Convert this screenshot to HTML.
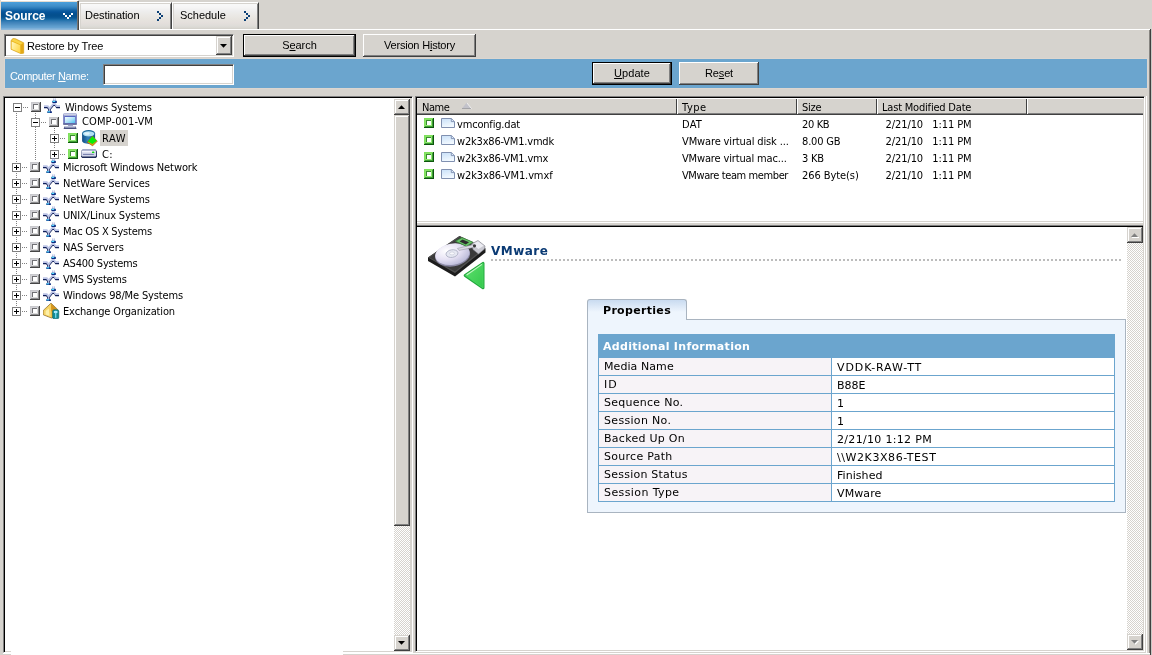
<!DOCTYPE html><html><head><meta charset="utf-8"><title>Restore Manager</title><style>
*{box-sizing:border-box;margin:0;padding:0}
html,body{width:1152px;height:655px;overflow:hidden;background:#d6d3ce}
body{position:relative;color:#000;line-height:13px;font-family:"DejaVu Sans Condensed","DejaVu Sans","Liberation Sans",sans-serif;font-size:11px}
#root{position:absolute;left:0;top:0;width:1152px;height:655px;overflow:hidden;will-change:transform}
.a{position:absolute}
.t{position:absolute;white-space:nowrap;line-height:13px;height:13px}
.tah{font-family:"DejaVu Sans Condensed","DejaVu Sans","Liberation Sans",sans-serif;font-size:11px}
.ms{font-family:"Liberation Sans",sans-serif;font-size:11px}
.msb{font-family:"Liberation Sans",sans-serif;font-size:12px;font-weight:bold}
.ver{font-family:"DejaVu Sans","Liberation Sans",sans-serif;font-size:11px}
.verb{font-family:"DejaVu Sans","Liberation Sans",sans-serif;font-size:11px;font-weight:bold}
.verh{font-family:"DejaVu Sans","Liberation Sans",sans-serif;font-size:12px;font-weight:bold}
u{text-decoration:underline;text-underline-offset:1px;text-decoration-thickness:1px}
.btn{position:absolute;background:#d6d3ce;box-shadow:inset -1px -1px #404040,inset 1px 1px #fff,inset -2px -2px #808080}
.btn.def{border:1px solid #000}
.sunk{position:absolute;background:#fff;border:1px solid;border-color:#808080 #fff #fff #808080;box-shadow:inset 1px 1px #404040,inset -1px -1px #d6d3ce}
.sunk.k{box-shadow:inset 1px 1px #000,inset -1px -1px #d6d3ce}
.sb{position:absolute;width:16px;background-color:#d6d3ce;background-image:conic-gradient(#fff 25%,#d6d3ce 0 50%,#fff 0 75%,#d6d3ce 0);background-size:2px 2px}
.sbb{position:absolute;left:0;width:16px;height:16px;background:#d6d3ce;box-shadow:inset -1px -1px #404040,inset 1px 1px #d6d3ce,inset -2px -2px #808080,inset 2px 2px #fff}
.tab{position:absolute;top:2px;height:27px;border-right:1px solid #404040;border-left:1px solid #fff;border-top:1px solid #fff;box-shadow:inset 1px 1px #d6d3ce,inset -1px 0 #808080;background:linear-gradient(#f8f8f8 0,#f8f8f8 2px,#f5f4f4 5px,#eeeeee 8px,#ebe9e6 12px,#e7e4df 16px,#e4dfdc 20px,#dedcd8 23px,#d8d6d0 25px,#d0cdc8 26px)}
.xb{position:absolute;width:9px;height:9px;border:1px solid #808080;background:#fff}
.xb i{position:absolute;left:1px;top:3px;width:5px;height:1px;background:#000}
.xb b{position:absolute;left:3px;top:1px;width:1px;height:5px;background:#000}
.hd{position:absolute;background-image:linear-gradient(90deg,#808080 50%,transparent 0);background-size:2px 1px;height:1px}
.vd{position:absolute;background-image:linear-gradient(#808080 50%,transparent 0);background-size:1px 2px;width:1px}
.cb{position:absolute;width:10px;height:10px}
</style></head><body>
<div id="root">
<svg width="0" height="0" style="position:absolute">
<defs>
<linearGradient id="gfile" x1="0" y1="0" x2="0.3" y2="1"><stop offset="0" stop-color="#c8e0f8"/><stop offset="1" stop-color="#f2f9ff"/></linearGradient>
<linearGradient id="gfold" x1="0" y1="0" x2="1" y2="0.6"><stop offset="0" stop-color="#fff8c8"/><stop offset="0.5" stop-color="#ffe884"/><stop offset="1" stop-color="#ffd850"/></linearGradient>
<linearGradient id="gscr" x1="0" y1="0" x2="1" y2="1"><stop offset="0" stop-color="#f4fdff"/><stop offset="0.5" stop-color="#b4e4f8"/><stop offset="1" stop-color="#4cc0f0"/></linearGradient>
<linearGradient id="gcyl" x1="0" y1="0" x2="1" y2="0"><stop offset="0" stop-color="#114c84"/><stop offset="0.45" stop-color="#3484bc"/><stop offset="1" stop-color="#185890"/></linearGradient>
<radialGradient id="plat" cx="0.35" cy="0.3" r="0.8"><stop offset="0" stop-color="#ffffff"/><stop offset="0.5" stop-color="#e6e2f4"/><stop offset="1" stop-color="#b4b4d4"/></radialGradient>
<linearGradient id="garr" x1="0" y1="0" x2="1" y2="1"><stop offset="0" stop-color="#5ee06e"/><stop offset="1" stop-color="#34c84c"/></linearGradient>
<symbol id="cbg" viewBox="0 0 10 10">
<g shape-rendering="crispEdges">
<rect width="10" height="10" fill="#c8c8cc"/>
<path d="M9 0h1v10h-10v-1h9z" fill="#464646"/>
<path d="M8 1h1v8h-8v-1h7z" fill="#8e8e90"/>
<rect x="1" y="1" width="7" height="7" fill="#d2d2d6"/>
<rect x="2" y="2" width="6" height="6" fill="#dcdcdc"/>
<path d="M2 2h5v1h-4v4h-1z" fill="#707074"/>
<rect x="3" y="3" width="4" height="4" fill="#fff"/>
</g></symbol>
<symbol id="cbn" viewBox="0 0 10 10">
<g shape-rendering="crispEdges">
<rect width="10" height="10" fill="#7fe05c"/>
<path d="M9 0h1v10h-10v-1h9z" fill="#0c560c"/>
<path d="M8 1h1v8h-8v-1h7z" fill="#3e9e36"/>
<rect x="1" y="1" width="7" height="7" fill="#86e466"/>
<rect x="2" y="2" width="6" height="6" fill="#92ea72"/>
<path d="M2 2h5v1h-4v4h-1z" fill="#3a8a30"/>
<rect x="3" y="3" width="4" height="4" fill="#fff"/>
</g></symbol>
<symbol id="net" viewBox="0 0 16 16">
<g fill="none">
<path d="M0 9.6H3.3L5.5 12.2L10.5 6.2L12.7 9.6H16" stroke="#101f58" stroke-width="1.1"/>
<path d="M0 8.2H3.8L5.6 10.4L10.4 4.8L12.4 8.2H16" stroke="#bcc4e6" stroke-width="1.7"/>
<path d="M9.7 0.4V3M11.3 0.4V3" stroke="#a8b2de" stroke-width="0.9"/>
<path d="M4.7 11.6V13.6M6.3 11.6V13.6" stroke="#16286a" stroke-width="0.9"/>
<path d="M5.5 11V13.4" stroke="#c8d0ec" stroke-width="0.8"/>
</g>
<rect x="3.3" y="13.2" width="4.6" height="1.9" rx="0.4" fill="#0c2c80"/>
<rect x="3.6" y="13.2" width="2.4" height="1.2" fill="#4fd8ff"/>
<rect x="8.3" y="2.8" width="4.6" height="2.1" rx="0.4" fill="#0c2c80"/>
<rect x="8.6" y="2.8" width="2.6" height="1.2" fill="#4fd8ff"/>
</symbol>
<symbol id="file" viewBox="0 0 14 10">
<path d="M0.5 0.5H10.5L13.5 3.5V9.5H0.5Z" fill="url(#gfile)" stroke="#8090b0" stroke-width="1"/>
<path d="M10.3 0.8V3.6H13.3" fill="#dce8fa" stroke="#7c8cae" stroke-width="0.9"/>
</symbol>
<symbol id="folder" viewBox="0 0 15 16">
<path d="M1 2.4L3 0.5L5.4 0.7L13.7 4.8V15.2L11 15.7L1 11.3Z" fill="#ecb41c" stroke="#d49c10" stroke-width="0.6"/>
<path d="M3 1L5.2 1.2L12.8 5L10.6 6.6L2 2.8Z" fill="#f8d448"/>
<path d="M1.6 3.4L10.4 7.2V15L1.6 10.9Z" fill="url(#gfold)"/>
<path d="M10.7 7.2L13.3 5.6V14.7L10.7 15.2Z" fill="#e2a818"/>
</symbol>
<symbol id="comp" viewBox="0 0 16 17">
<rect x="1" y="0.2" width="14" height="11.6" rx="1.5" fill="#8890ca"/>
<rect x="1.6" y="0.4" width="12.8" height="2.2" rx="1" fill="#ccd0e4"/>
<rect x="1.2" y="10.2" width="13.6" height="1.6" rx="0.6" fill="#5c648e"/>
<rect x="2.6" y="3" width="10.8" height="7.4" fill="#5866c2"/>
<rect x="3" y="4" width="10" height="6" fill="url(#gscr)"/>
<path d="M6.3 11.8h4.4l0.8 2h-6z" fill="#9aa0c6"/>
<path d="M2.4 13.4h11.4l0.8 2.6h-13z" fill="#4a5280"/>
<path d="M3 13.3h10.2l0.3 1.1h-10.8z" fill="#d0d4e8"/>
</symbol>
<symbol id="raw" viewBox="0 0 16 17">
<path d="M0.1 3.5V10.8C0.1 12.6 3 13.9 6.6 13.9S13.1 12.6 13.1 10.8V3.5Z" fill="url(#gcyl)"/>
<ellipse cx="6.6" cy="3.5" rx="6.5" ry="3.4" fill="#1c6a9c"/>
<ellipse cx="6.6" cy="3.8" rx="5.7" ry="2.6" fill="#b2e0f5"/>
<ellipse cx="5" cy="3.6" rx="2.8" ry="1.3" fill="#e0f4fc"/>
<path d="M10.5 6L15.3 11.2L10.6 15.9L5 12.2Z" fill="#e29c14" stroke="#8a4a08" stroke-width="0.5"/>
<path d="M10.5 6.3L14.8 10.7L10.4 14L5.8 11.6Z" fill="#08ee08"/>
</symbol>
<symbol id="drive" viewBox="0 0 16 10">
<path d="M2.2 0H13.8L16 2.2V7.6L15 9H1.2L0 7.6V2.2Z" fill="#1e2a56"/>
<path d="M2.2 0H13.8L15.4 2H0.6Z" fill="#a2aac8"/>
<rect x="0.3" y="1.8" width="14.8" height="5.6" rx="0.8" fill="#d2d6ea"/>
<rect x="1" y="2" width="13" height="1.3" fill="#f2f2fa"/>
<rect x="2" y="4.9" width="10.8" height="1" fill="#727aaa"/>
<rect x="11" y="2.6" width="2.4" height="1.5" rx="0.6" fill="#0cdc0c"/>
</symbol>
<symbol id="exch" viewBox="0 0 17 16">
<path d="M8 0.2L14.6 6.4V12.6L8.5 15L0.3 11.8V7.4Z" fill="#e8b232" stroke="#6a4c10" stroke-width="0.6"/>
<path d="M8 0.8L8.5 14.6L0.7 11.6V7.6Z" fill="#f6d468"/>
<path d="M2.6 8L5.8 5.6L6.4 12.8L2.6 11.4Z" fill="#fdf0a8"/>
<path d="M8 0.8L14.2 6.6L8.4 8.4Z" fill="#d4941e"/>
<rect x="9.6" y="6.8" width="6.2" height="9" rx="1.5" fill="#108c96" stroke="#0a6068" stroke-width="0.6"/>
<ellipse cx="12.7" cy="9" rx="2" ry="1.2" fill="#a8ecff"/>
<rect x="12.2" y="9.4" width="1.1" height="5.4" fill="#8ce4fc"/>
</symbol>
<symbol id="hdd" viewBox="0 0 60 56">
<path d="M1 22.5L32.5 1L58.5 13.5V17.5L28 41.5L1 26Z" fill="#1c1c1c"/>
<path d="M1 22.5L32.5 1L58.5 13.5L28 38Z" fill="#505050"/>
<path d="M2.5 22.6L32.6 2.2L56.5 13.6L28 36.5Z" fill="#3a3a3a"/>
<ellipse cx="25.6" cy="20.2" rx="17.6" ry="11.2" transform="rotate(-9 25.6 20.2)" fill="#8c8aa6"/>
<ellipse cx="25.4" cy="19.2" rx="17.3" ry="10.6" transform="rotate(-9 25.4 19.2)" fill="url(#plat)"/>
<ellipse cx="25" cy="18.6" rx="6" ry="3.8" transform="rotate(-9 25 18.6)" fill="#e6e8f2" stroke="#a8acc0" stroke-width="0.8"/>
<ellipse cx="25" cy="18.4" rx="2.4" ry="1.5" fill="#f8f8fc" stroke="#b8bccc" stroke-width="0.5"/>
<path d="M28.5 6.2L35 2.6L46 7.2L39.5 11.4Z" fill="#66c466" stroke="#3c7c3c" stroke-width="0.8"/>
<path d="M32.5 6.4L35.6 4.6L42 7.3L38.9 9.4Z" fill="#2c2c2c"/>
<path d="M44.5 9L51 5.5L58 11L57.5 14L51.5 19L46 14.5Z" fill="#c8c8d0" stroke="#7c7c84" stroke-width="0.6"/>
<path d="M45.5 9.2L51 6.3L56.8 10.8L51.4 14Z" fill="#ececf2"/>
<path d="M30.5 13.4L46.5 9.6L47.5 12.2L32 15.4Z" fill="#dcdce4" stroke="#8c8c98" stroke-width="0.5"/>
<circle cx="47.5" cy="10.8" r="1.6" fill="#3a3a3a"/>
<path d="M56 28.4V52.8L38.2 40.4Z" fill="url(#garr)" stroke="#22a83c" stroke-width="3" stroke-linejoin="round"/><path d="M56 28.4V52.8L38.2 40.4Z" fill="url(#garr)" stroke="#46d45e" stroke-width="1" stroke-linejoin="round"/>
<path d="M55 29.4L39.6 40" stroke="#c4f6c4" stroke-width="1.1"/>
</symbol>
</defs></svg>

<div class="a" style="left:0;top:29px;width:1150px;height:1px;background:#fff"></div>
<div class="a" style="left:1149px;top:30px;width:1px;height:625px;background:#868480"></div>
<div class="a" style="left:1150px;top:29px;width:1px;height:626px;background:#404040"></div>
<div class="a" style="left:1151px;top:29px;width:1px;height:626px;background:#cac8c4"></div>
<div class="a" style="left:1146px;top:96px;width:1px;height:557px;background:#fff"></div>
<div class="a" style="left:1px;top:0;width:77px;height:1px;background:#fff"></div>
<div class="a" style="left:0;top:1px;width:78px;height:1px;background:#e4dcd2"></div>
<div class="a" style="left:0;top:1px;width:1px;height:29px;background:#e4dcd2"></div>
<div class="a" style="left:77px;top:1px;width:2px;height:29px;background:linear-gradient(90deg,#787470 50%,#484848 0)"></div>
<div class="a" style="left:1px;top:2px;width:76px;height:28px;background:linear-gradient(#48a0dc 0,#4696d2 2px,#3f8ec8 4px,#2c7cbc 6px,#1464a6 8px,#06549a 10px,#045090 12px,#04508e 14px,#0a5896 16px,#2070aa 18px,#3a80b8 20px,#4c8cc0 22px,#5c9ccc 24px,#6ca6d4 26px,#8cb8dc 27px,#8eb8da 28px)"></div>
<span class="t msb" style="left:5px;top:10px;letter-spacing:-0.048px;color:#fff">Source</span>
<div class="a" style="left:63px;top:13px;width:2px;height:2px;background:#fff"></div>
<div class="a" style="left:65px;top:15px;width:2px;height:2px;background:#fff"></div>
<div class="a" style="left:67px;top:17px;width:2px;height:2px;background:#fff"></div>
<div class="a" style="left:69px;top:15px;width:2px;height:2px;background:#fff"></div>
<div class="a" style="left:71px;top:13px;width:2px;height:2px;background:#fff"></div>
<div class="tab" style="left:79px;width:93px"></div>
<span class="t ms" style="left:85px;top:9px;letter-spacing:-0.050px;">Destination</span>
<div class="a" style="left:157px;top:11px;width:2px;height:2px;background:#0a3f76"></div>
<div class="a" style="left:159px;top:13px;width:2px;height:2px;background:#0a3f76"></div>
<div class="a" style="left:161px;top:15px;width:2px;height:2px;background:#0a3f76"></div>
<div class="a" style="left:159px;top:17px;width:2px;height:2px;background:#0a3f76"></div>
<div class="a" style="left:157px;top:19px;width:2px;height:2px;background:#0a3f76"></div>
<div class="tab" style="left:172px;width:87px"></div>
<span class="t ms" style="left:180px;top:9px;letter-spacing:-0.016px;">Schedule</span>
<div class="a" style="left:244px;top:11px;width:2px;height:2px;background:#0a3f76"></div>
<div class="a" style="left:246px;top:13px;width:2px;height:2px;background:#0a3f76"></div>
<div class="a" style="left:248px;top:15px;width:2px;height:2px;background:#0a3f76"></div>
<div class="a" style="left:246px;top:17px;width:2px;height:2px;background:#0a3f76"></div>
<div class="a" style="left:244px;top:19px;width:2px;height:2px;background:#0a3f76"></div>
<div class="sunk" style="left:4px;top:34px;width:230px;height:23px"></div>
<svg class="a" style="left:10px;top:38px" width="15" height="16" viewBox="0 0 15 16"><use href="#folder"/></svg>
<span class="t ms" style="left:27px;top:40px;letter-spacing:-0.138px;">Restore by Tree</span>
<div class="btn" style="left:216px;top:36px;width:16px;height:19px;box-shadow:inset -1px -1px #404040,inset 1px 1px #d6d3ce,inset -2px -2px #808080,inset 2px 2px #fff"></div>
<svg class="a" style="left:220px;top:44px" width="7" height="4" viewBox="0 0 7 4"><path d="M0 0H7L3.5 3.7Z" fill="#000"/></svg>
<div class="btn def" style="left:243px;top:34px;width:113px;height:23px"></div>
<span class="t ms" style="left:282.2px;top:39px;letter-spacing:-0.062px;">S<u>e</u>arch</span>
<div class="btn" style="left:363px;top:34px;width:113px;height:23px"></div>
<span class="t ms" style="left:384.0px;top:39px;letter-spacing:-0.200px;">Version H<u>i</u>story</span>
<div class="a" style="left:4px;top:58px;width:1144px;height:31px;background:#6ba5ce;border:1px solid #dcd6d0"></div>
<span class="t ms" style="left:10px;top:70px;letter-spacing:-0.370px;color:#fff">Computer <u>N</u>ame:</span>
<div class="sunk" style="left:103px;top:64px;width:131px;height:21px"></div>
<div class="btn def" style="left:592px;top:62px;width:80px;height:23px"></div>
<span class="t ms" style="left:614.1px;top:67px;letter-spacing:0.036px;"><u>U</u>pdate</span>
<div class="btn" style="left:679px;top:62px;width:80px;height:23px"></div>
<span class="t ms" style="left:705.0px;top:67px;letter-spacing:-0.150px;">Re<u>s</u>et</span>
<div class="sunk k" style="left:3px;top:96px;width:410px;height:557px"></div>
<div class="a" style="left:410px;top:98px;width:1px;height:553px;background:#d6d3ce"></div>
<div class="a" style="left:3px;top:654px;width:1147px;height:1px;background:#d6d3ce"></div>
<div class="a" style="left:3px;top:653px;width:1147px;height:1px;background:#fff"></div>
<div class="a" style="left:11px;top:651px;width:332px;height:4px;background:#fff"></div>
<div class="sb" style="left:394px;top:99px;height:552px"><div class="sbb" style="top:0"></div><div class="sbb" style="top:16px;height:411px"></div><div class="sbb" style="top:536px"></div></div>
<svg class="a" style="left:398px;top:105px" width="7" height="4" viewBox="0 0 7 4"><path d="M0 4H7L3.5 0.3Z" fill="#000"/></svg>
<svg class="a" style="left:398px;top:641px" width="7" height="4" viewBox="0 0 7 4"><path d="M0 0H7L3.5 3.7Z" fill="#000"/></svg>
<div class="vd" style="left:16px;top:113px;height:50px"></div>
<div class="vd" style="left:35px;top:113px;height:5px"></div>
<div class="vd" style="left:35px;top:127px;height:34px"></div>
<div class="vd" style="left:54px;top:128px;height:6px"></div>
<div class="vd" style="left:54px;top:143px;height:6px"></div>
<div class="vd" style="left:16px;top:173px;height:6px"></div>
<div class="vd" style="left:16px;top:189px;height:6px"></div>
<div class="vd" style="left:16px;top:205px;height:6px"></div>
<div class="vd" style="left:16px;top:221px;height:6px"></div>
<div class="vd" style="left:16px;top:237px;height:6px"></div>
<div class="vd" style="left:16px;top:253px;height:6px"></div>
<div class="vd" style="left:16px;top:269px;height:6px"></div>
<div class="vd" style="left:16px;top:285px;height:6px"></div>
<div class="vd" style="left:16px;top:301px;height:6px"></div>
<div class="xb" style="left:13px;top:103px"><i></i></div>
<div class="hd" style="left:23px;top:107px;width:6px"></div>
<svg class="cb" style="left:31px;top:102px" viewBox="0 0 10 10"><use href="#cbg"/></svg>
<svg class="a" style="left:44px;top:98px" width="16" height="16" viewBox="0 0 16 16"><use href="#net"/></svg>
<span class="t tah" style="left:65px;top:101px;letter-spacing:-0.177px;">Windows Systems</span>
<div class="xb" style="left:31px;top:118px"><i></i></div>
<div class="hd" style="left:41px;top:122px;width:6px"></div>
<svg class="cb" style="left:49px;top:117px" viewBox="0 0 10 10"><use href="#cbg"/></svg>
<svg class="a" style="left:62px;top:113px" width="16" height="17" viewBox="0 0 16 17"><use href="#comp"/></svg>
<span class="t tah" style="left:82px;top:115px;letter-spacing:0.121px;">COMP-001-VM</span>
<div class="xb" style="left:50px;top:134px"><i></i><b></b></div>
<div class="hd" style="left:60px;top:138px;width:6px"></div>
<svg class="cb" style="left:68px;top:133px" viewBox="0 0 10 10"><use href="#cbn"/></svg>
<svg class="a" style="left:82px;top:130px" width="16" height="17" viewBox="0 0 16 17"><use href="#raw"/></svg>
<div class="a" style="left:100px;top:130px;width:28px;height:16px;background:#d6d3ce"></div>
<span class="t tah" style="left:102px;top:132px;letter-spacing:0.636px;">RAW</span>
<div class="xb" style="left:50px;top:150px"><i></i><b></b></div>
<div class="hd" style="left:60px;top:154px;width:6px"></div>
<svg class="cb" style="left:68px;top:149px" viewBox="0 0 10 10"><use href="#cbn"/></svg>
<svg class="a" style="left:81px;top:149px" width="16" height="10" viewBox="0 0 16 10"><use href="#drive"/></svg>
<span class="t tah" style="left:102px;top:148px;letter-spacing:0.375px;">C:</span>
<div class="xb" style="left:12px;top:163px"><i></i><b></b></div>
<div class="hd" style="left:22px;top:167px;width:6px"></div>
<svg class="cb" style="left:30px;top:162px" viewBox="0 0 10 10"><use href="#cbg"/></svg>
<svg class="a" style="left:43px;top:158px" width="16" height="16" viewBox="0 0 16 16"><use href="#net"/></svg>
<span class="t tah" style="left:63px;top:161px;letter-spacing:-0.090px;">Microsoft Windows Network</span>
<div class="xb" style="left:12px;top:179px"><i></i><b></b></div>
<div class="hd" style="left:22px;top:183px;width:6px"></div>
<svg class="cb" style="left:30px;top:178px" viewBox="0 0 10 10"><use href="#cbg"/></svg>
<svg class="a" style="left:43px;top:174px" width="16" height="16" viewBox="0 0 16 16"><use href="#net"/></svg>
<span class="t tah" style="left:63px;top:177px;letter-spacing:-0.026px;">NetWare Services</span>
<div class="xb" style="left:12px;top:195px"><i></i><b></b></div>
<div class="hd" style="left:22px;top:199px;width:6px"></div>
<svg class="cb" style="left:30px;top:194px" viewBox="0 0 10 10"><use href="#cbg"/></svg>
<svg class="a" style="left:43px;top:190px" width="16" height="16" viewBox="0 0 16 16"><use href="#net"/></svg>
<span class="t tah" style="left:63px;top:193px;letter-spacing:-0.049px;">NetWare Systems</span>
<div class="xb" style="left:12px;top:211px"><i></i><b></b></div>
<div class="hd" style="left:22px;top:215px;width:6px"></div>
<svg class="cb" style="left:30px;top:210px" viewBox="0 0 10 10"><use href="#cbg"/></svg>
<svg class="a" style="left:43px;top:206px" width="16" height="16" viewBox="0 0 16 16"><use href="#net"/></svg>
<span class="t tah" style="left:63px;top:209px;letter-spacing:-0.147px;">UNIX/Linux Systems</span>
<div class="xb" style="left:12px;top:227px"><i></i><b></b></div>
<div class="hd" style="left:22px;top:231px;width:6px"></div>
<svg class="cb" style="left:30px;top:226px" viewBox="0 0 10 10"><use href="#cbg"/></svg>
<svg class="a" style="left:43px;top:222px" width="16" height="16" viewBox="0 0 16 16"><use href="#net"/></svg>
<span class="t tah" style="left:63px;top:225px;letter-spacing:-0.218px;">Mac OS X Systems</span>
<div class="xb" style="left:12px;top:243px"><i></i><b></b></div>
<div class="hd" style="left:22px;top:247px;width:6px"></div>
<svg class="cb" style="left:30px;top:242px" viewBox="0 0 10 10"><use href="#cbg"/></svg>
<svg class="a" style="left:43px;top:238px" width="16" height="16" viewBox="0 0 16 16"><use href="#net"/></svg>
<span class="t tah" style="left:63px;top:241px;letter-spacing:-0.038px;">NAS Servers</span>
<div class="xb" style="left:12px;top:259px"><i></i><b></b></div>
<div class="hd" style="left:22px;top:263px;width:6px"></div>
<svg class="cb" style="left:30px;top:258px" viewBox="0 0 10 10"><use href="#cbg"/></svg>
<svg class="a" style="left:43px;top:254px" width="16" height="16" viewBox="0 0 16 16"><use href="#net"/></svg>
<span class="t tah" style="left:63px;top:257px;letter-spacing:-0.203px;">AS400 Systems</span>
<div class="xb" style="left:12px;top:275px"><i></i><b></b></div>
<div class="hd" style="left:22px;top:279px;width:6px"></div>
<svg class="cb" style="left:30px;top:274px" viewBox="0 0 10 10"><use href="#cbg"/></svg>
<svg class="a" style="left:43px;top:270px" width="16" height="16" viewBox="0 0 16 16"><use href="#net"/></svg>
<span class="t tah" style="left:63px;top:273px;letter-spacing:-0.300px;">VMS Systems</span>
<div class="xb" style="left:12px;top:291px"><i></i><b></b></div>
<div class="hd" style="left:22px;top:295px;width:6px"></div>
<svg class="cb" style="left:30px;top:290px" viewBox="0 0 10 10"><use href="#cbg"/></svg>
<svg class="a" style="left:43px;top:286px" width="16" height="16" viewBox="0 0 16 16"><use href="#net"/></svg>
<span class="t tah" style="left:63px;top:289px;letter-spacing:-0.146px;">Windows 98/Me Systems</span>
<div class="xb" style="left:12px;top:307px"><i></i><b></b></div>
<div class="hd" style="left:22px;top:311px;width:6px"></div>
<svg class="cb" style="left:30px;top:306px" viewBox="0 0 10 10"><use href="#cbg"/></svg>
<svg class="a" style="left:43px;top:303px" width="17" height="16" viewBox="0 0 17 16"><use href="#exch"/></svg>
<span class="t tah" style="left:63px;top:305px;letter-spacing:-0.130px;">Exchange Organization</span>
<div class="sunk k" style="left:415px;top:96px;width:730px;height:556px"></div>
<div class="a" style="left:417px;top:221px;width:726px;height:6px;background:#d6d3ce;border-top:1px solid #d6d3ce;border-bottom:1px solid #000;box-shadow:inset 0 1px #fff,inset 0 -1px #808080"></div>
<div class="a" style="left:417px;top:98px;width:726px;height:17px;background:#d6d3ce;border-bottom:1px solid #404040;box-shadow:inset 0 -1px #808080,inset 0 1px #fff"></div>
<div class="a" style="left:676px;top:99px;width:1px;height:15px;background:#404040"></div>
<div class="a" style="left:677px;top:99px;width:1px;height:15px;background:#fff"></div>
<div class="a" style="left:796px;top:99px;width:1px;height:15px;background:#404040"></div>
<div class="a" style="left:797px;top:99px;width:1px;height:15px;background:#fff"></div>
<div class="a" style="left:876px;top:99px;width:1px;height:15px;background:#404040"></div>
<div class="a" style="left:877px;top:99px;width:1px;height:15px;background:#fff"></div>
<div class="a" style="left:1026px;top:99px;width:1px;height:15px;background:#404040"></div>
<div class="a" style="left:1027px;top:99px;width:1px;height:15px;background:#fff"></div>
<span class="t tah" style="left:422px;top:101px;letter-spacing:-0.488px;">Name</span>
<span class="t tah" style="left:682px;top:101px;letter-spacing:0.547px;">Type</span>
<span class="t tah" style="left:802px;top:101px;letter-spacing:-0.270px;">Size</span>
<span class="t tah" style="left:882px;top:101px;letter-spacing:-0.197px;">Last Modified Date</span>
<svg class="a" style="left:461px;top:102px" width="12" height="8" viewBox="0 0 12 8"><path d="M5.5 0.8L10.2 6.6H1Z" fill="#c2c2ca"/><path d="M1 6.5H10" stroke="#a4a4a8" stroke-width="1"/><path d="M6 1L10.6 6.8" fill="none" stroke="#f0f0f0" stroke-width="0.9"/></svg>
<svg class="cb" style="left:424px;top:118px" viewBox="0 0 10 10"><use href="#cbn"/></svg>
<svg class="a" style="left:441px;top:118px" width="14" height="10" viewBox="0 0 14 10"><use href="#file"/></svg>
<span class="t tah" style="left:457px;top:118px;letter-spacing:-0.180px;">vmconfig.dat</span>
<span class="t tah" style="left:682px;top:118px;letter-spacing:0.203px;">DAT</span>
<span class="t tah" style="left:802px;top:118px;letter-spacing:-0.353px;">20 KB</span>
<span class="t tah" style="left:885.5px;top:118px;letter-spacing:-0.085px;">2/21/10&nbsp;&nbsp; 1:11 PM</span>
<svg class="cb" style="left:424px;top:135px" viewBox="0 0 10 10"><use href="#cbn"/></svg>
<svg class="a" style="left:441px;top:135px" width="14" height="10" viewBox="0 0 14 10"><use href="#file"/></svg>
<span class="t tah" style="left:457px;top:135px;letter-spacing:-0.190px;">w2k3x86-VM1.vmdk</span>
<span class="t tah" style="left:682px;top:135px;letter-spacing:-0.132px;">VMware virtual disk ...</span>
<span class="t tah" style="left:802px;top:135px;letter-spacing:-0.163px;">8.00 GB</span>
<span class="t tah" style="left:885.5px;top:135px;letter-spacing:-0.085px;">2/21/10&nbsp;&nbsp; 1:11 PM</span>
<svg class="cb" style="left:424px;top:152px" viewBox="0 0 10 10"><use href="#cbn"/></svg>
<svg class="a" style="left:441px;top:152px" width="14" height="10" viewBox="0 0 14 10"><use href="#file"/></svg>
<span class="t tah" style="left:457px;top:152px;letter-spacing:-0.176px;">w2k3x86-VM1.vmx</span>
<span class="t tah" style="left:682px;top:152px;letter-spacing:-0.149px;">VMware virtual mac...</span>
<span class="t tah" style="left:802px;top:152px;letter-spacing:-0.242px;">3 KB</span>
<span class="t tah" style="left:885.5px;top:152px;letter-spacing:-0.085px;">2/21/10&nbsp;&nbsp; 1:11 PM</span>
<svg class="cb" style="left:424px;top:169px" viewBox="0 0 10 10"><use href="#cbn"/></svg>
<svg class="a" style="left:441px;top:169px" width="14" height="10" viewBox="0 0 14 10"><use href="#file"/></svg>
<span class="t tah" style="left:457px;top:169px;letter-spacing:-0.117px;">w2k3x86-VM1.vmxf</span>
<span class="t tah" style="left:682px;top:169px;letter-spacing:-0.398px;">VMware team member</span>
<span class="t tah" style="left:802px;top:169px;letter-spacing:-0.071px;">266 Byte(s)</span>
<span class="t tah" style="left:885.5px;top:169px;letter-spacing:-0.085px;">2/21/10&nbsp;&nbsp; 1:11 PM</span>
<div class="sb" style="left:1127px;top:227px;height:423px"><div class="sbb" style="top:0"></div><div class="sbb" style="top:407px"></div></div>
<svg class="a" style="left:1131px;top:233px" width="8" height="5" viewBox="0 0 8 5"><path d="M1 4.5H8" stroke="#fff"/><path d="M0 4H7L3.5 0.3Z" fill="#808080"/></svg>
<svg class="a" style="left:1131px;top:640px" width="9" height="5" viewBox="0 0 9 5"><path d="M1 1H8L4.5 4.7Z" fill="#fff"/><path d="M0 0H7L3.5 3.7Z" fill="#808080"/></svg>
<svg class="a" style="left:427px;top:235px" width="60" height="56" viewBox="0 0 60 56"><use href="#hdd"/></svg>
<span class="t verh" style="left:491px;top:245px;letter-spacing:0.472px;color:#0a3a74">VMware</span>
<div class="a" style="left:491px;top:259px;width:631px;height:2px;background-image:linear-gradient(90deg,#bcbcbc 2px,transparent 0);background-size:4px 2px"></div>
<div class="a" style="left:587px;top:319px;width:539px;height:194px;background:#eef5fd;border:1px solid #a9b4c0"></div>
<div class="a" style="left:587px;top:299px;width:100px;height:21px;background:linear-gradient(#c9dbf0,#eef5fd 60%);border:1px solid #a9b4c0;border-bottom:0;border-radius:3px 3px 0 0"></div>
<span class="t verb" style="left:603px;top:304px;letter-spacing:0.316px;">Properties</span>
<div class="a" style="left:598px;top:334px;width:517px;height:168px;background:#6ba5ce"></div>
<span class="t verb" style="left:603px;top:340px;letter-spacing:0.308px;color:#fff">Additional Information</span>
<div class="a" style="left:599px;top:358px;width:232px;height:17px;background:#f7f3f7"></div>
<div class="a" style="left:832px;top:358px;width:282px;height:17px;background:#fff"></div>
<span class="t ver" style="left:604px;top:360px;letter-spacing:0.075px;">Media Name</span>
<span class="t ver" style="left:837px;top:361px;letter-spacing:0.905px;">VDDK-RAW-TT</span>
<div class="a" style="left:599px;top:376px;width:232px;height:17px;background:#f7f3f7"></div>
<div class="a" style="left:832px;top:376px;width:282px;height:17px;background:#fff"></div>
<span class="t ver" style="left:604px;top:378px;letter-spacing:0.891px;">ID</span>
<span class="t ver" style="left:837px;top:379px;letter-spacing:0.000px;">B88E</span>
<div class="a" style="left:599px;top:394px;width:232px;height:17px;background:#f7f3f7"></div>
<div class="a" style="left:832px;top:394px;width:282px;height:17px;background:#fff"></div>
<span class="t ver" style="left:604px;top:396px;letter-spacing:0.268px;">Sequence No.</span>
<span class="t ver" style="left:837px;top:397px;">1</span>
<div class="a" style="left:599px;top:412px;width:232px;height:17px;background:#f7f3f7"></div>
<div class="a" style="left:832px;top:412px;width:282px;height:17px;background:#fff"></div>
<span class="t ver" style="left:604px;top:414px;letter-spacing:0.320px;">Session No.</span>
<span class="t ver" style="left:837px;top:415px;">1</span>
<div class="a" style="left:599px;top:430px;width:232px;height:17px;background:#f7f3f7"></div>
<div class="a" style="left:832px;top:430px;width:282px;height:17px;background:#fff"></div>
<span class="t ver" style="left:604px;top:432px;letter-spacing:0.272px;">Backed Up On</span>
<span class="t ver" style="left:837px;top:433px;letter-spacing:0.318px;">2/21/10 1:12 PM</span>
<div class="a" style="left:599px;top:448px;width:232px;height:17px;background:#f7f3f7"></div>
<div class="a" style="left:832px;top:448px;width:282px;height:17px;background:#fff"></div>
<span class="t ver" style="left:604px;top:450px;letter-spacing:0.277px;">Source Path</span>
<span class="t ver" style="left:837px;top:451px;letter-spacing:0.580px;">\\W2K3X86-TEST</span>
<div class="a" style="left:599px;top:466px;width:232px;height:17px;background:#f7f3f7"></div>
<div class="a" style="left:832px;top:466px;width:282px;height:17px;background:#fff"></div>
<span class="t ver" style="left:604px;top:468px;letter-spacing:0.230px;">Session Status</span>
<span class="t ver" style="left:837px;top:469px;letter-spacing:0.053px;">Finished</span>
<div class="a" style="left:599px;top:484px;width:232px;height:17px;background:#f7f3f7"></div>
<div class="a" style="left:832px;top:484px;width:282px;height:17px;background:#fff"></div>
<span class="t ver" style="left:604px;top:486px;letter-spacing:0.397px;">Session Type</span>
<span class="t ver" style="left:837px;top:487px;letter-spacing:0.115px;">VMware</span>
</div></body></html>
